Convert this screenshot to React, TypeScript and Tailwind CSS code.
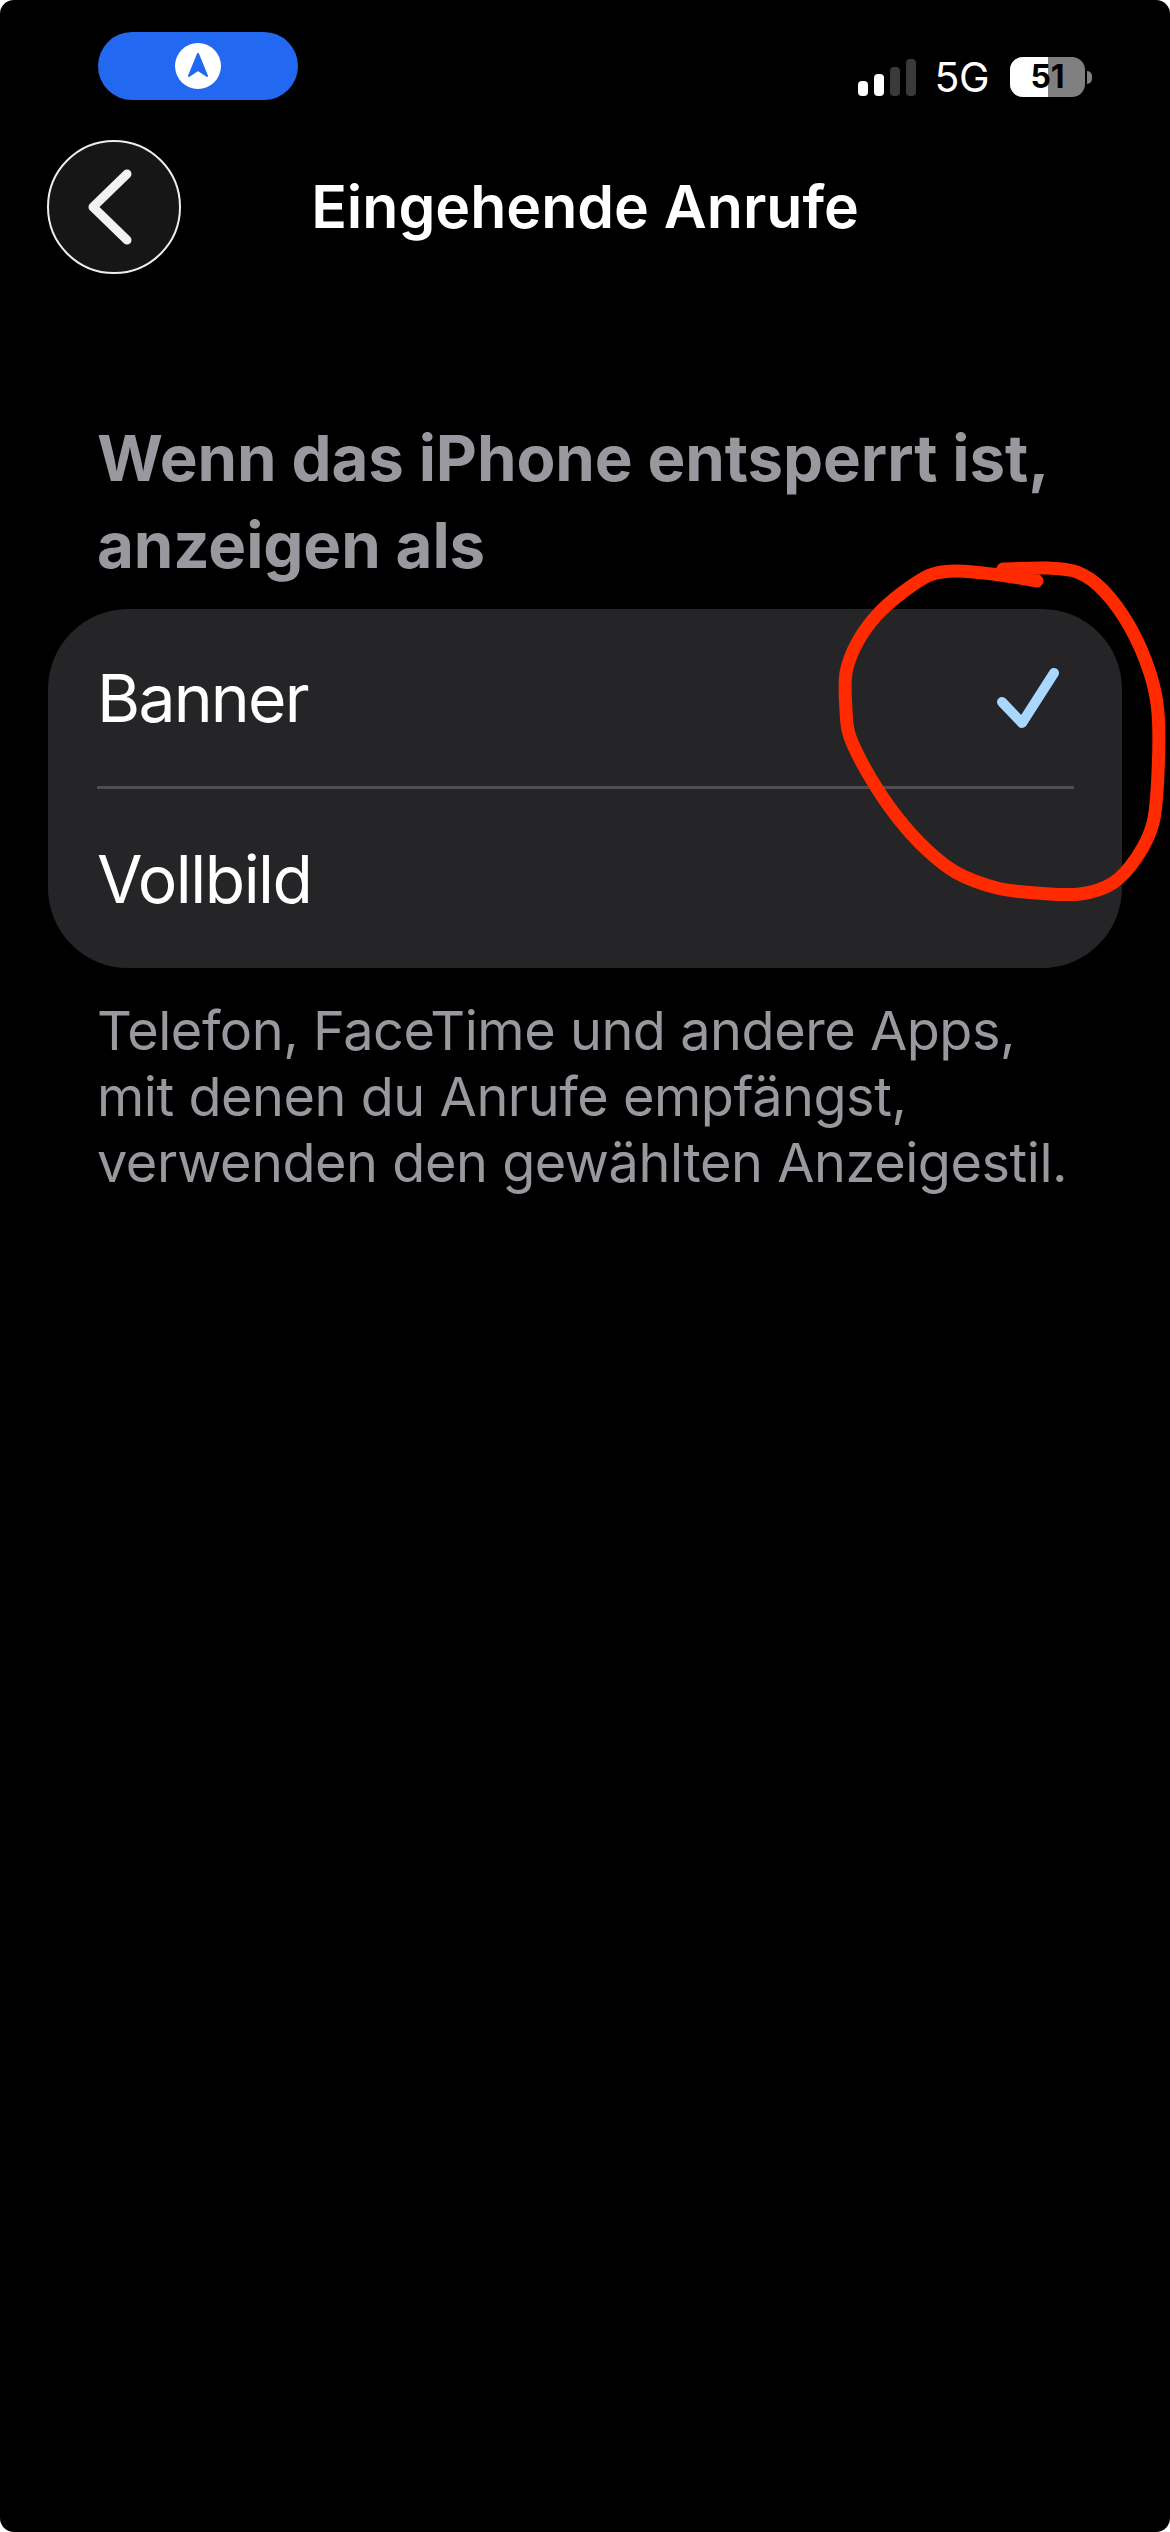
const loop: [number, number][] = [
  [1037, 581], [1000, 575], [957, 571], [930, 575], [903, 592], [877, 615], [857, 643], [846, 673],
  [846, 710], [850, 737], [870, 777], [897, 817], [927, 850], [957, 873], [997, 888], [1037, 893],
  [1080, 894], [1113, 883], [1137, 857], [1153, 823], [1158, 773], [1158, 713], [1150, 673],
  [1130, 627], [1103, 590], [1077, 572], [1047, 568], [1003, 569],
];

function smooth(p: [number, number][]) {
  let d = `M${p[0][0]} ${p[0][1]}`;
  for (let i = 0; i < p.length - 1; i++) {
    const a = p[Math.max(i - 1, 0)];
    const b = p[i];
    const c = p[i + 1];
    const e = p[Math.min(i + 2, p.length - 1)];
    d += ` C${b[0] + (c[0] - a[0]) / 6} ${b[1] + (c[1] - a[1]) / 6} ${c[0] - (e[0] - b[0]) / 6} ${c[1] - (e[1] - b[1]) / 6} ${c[0]} ${c[1]}`;
  }
  return d;
}

export default function App() {
  const font = { fontFamily: 'Inter, "Liberation Sans", sans-serif' };
  return (
    <div className="w-[1170px] h-[2532px] bg-white">
      <div style={font} className="relative w-[1170px] h-[2532px] bg-black rounded-[14px] overflow-hidden text-white">
        {/* status bar */}
        <div className="h-[140px] flex items-start justify-between pl-[98px]">
          <div className="mt-[32px] w-[200px] h-[68px] rounded-full bg-[#2268f0] flex items-center justify-center">
            <svg width="46" height="46" viewBox="0 0 46 46">
              <circle cx="23" cy="23" r="23" fill="#fff" />
              <path d="M23 11 L32 33 L23 27 L14 33 Z" fill="#2268f0" stroke="#2268f0" strokeWidth="2" strokeLinejoin="round" />
            </svg>
          </div>
          <div className="mt-[57px] mr-[78px] flex items-center">
            <svg width="58" height="38" viewBox="0 0 58 38" className="mr-[18px] mt-[2px]">
              <rect x="0" y="22" width="10" height="15" rx="4" fill="#fff" />
              <rect x="16" y="15" width="10" height="22" rx="4" fill="#fff" />
              <rect x="32" y="8" width="10" height="29" rx="4" fill="#3a3a3a" />
              <rect x="48" y="0" width="10" height="37" rx="4" fill="#3a3a3a" />
            </svg>
            <span className="text-[41px] leading-[40px] font-normal mr-[21px] tracking-[-0.5px]">5G</span>
            <div className="relative flex items-center">
              <div className="relative w-[75px] h-[40px] rounded-[13px] overflow-hidden flex bg-[#808080]">
                <div className="w-[38px] h-full bg-white" />
                <div className="absolute inset-0 flex items-center justify-center text-black text-[32px] font-bold leading-none">51</div>
              </div>
              <div className="ml-[2px] w-[5px] h-[13px] rounded-r-full bg-[#808080]" />
            </div>
          </div>
        </div>

        {/* nav */}
        <div className="relative h-[134px] mx-[47px] flex items-center justify-center">
          <div className="absolute left-0 top-0 w-[134px] h-[134px] rounded-full bg-[#161616] border-2 border-[#eeeeee] flex items-center justify-center">
            <svg width="48" height="76" viewBox="0 0 48 76" className="mr-[8px]">
              <path d="M41 5 L7 38 L41 71" fill="none" stroke="#f2f2f2" strokeWidth="9" strokeLinecap="round" strokeLinejoin="round" />
            </svg>
          </div>
          <h1 className="text-[59px] leading-[70px] font-semibold">Eingehende Anrufe</h1>
        </div>

        {/* section heading */}
        <h2 className="mt-[140px] ml-[97px] text-[#98989e] text-[63.6px] leading-[87px] font-bold tracking-[-0.1px]">
          Wenn das iPhone entsperrt ist,
          <br />
          anzeigen als
        </h2>

        {/* list */}
        <div className="mt-[21px] mx-[48px] w-[1074px] rounded-[80px] bg-[#252528] pl-[49px] pr-[48px]">
          <div className="h-[177px] pt-[1px] flex items-center justify-between">
            <span className="text-[66px] leading-[80px] tracking-[-1.8px]">Banner</span>
            <svg width="66" height="66" viewBox="0 0 66 66" className="mr-[13px] mt-[3px]">
              <path d="M7 35 L27 56 L59 6" fill="none" stroke="#a8d8ff" strokeWidth="10" strokeLinecap="round" strokeLinejoin="round" />
            </svg>
          </div>
          <div className="h-[3px] bg-[#4d4d52]" />
          <div className="h-[179px] flex items-center">
            <span className="text-[66px] leading-[80px] tracking-[-1.5px]">Vollbild</span>
          </div>
        </div>

        {/* footer note */}
        <p className="mt-[30px] ml-[97px] text-[#98989e] text-[54px] leading-[66px] tracking-[-0.45px]">
          Telefon, FaceTime und andere Apps,
          <br />
          mit denen du Anrufe empfängst,
          <br />
          verwenden den gewählten Anzeigestil.
        </p>

        {/* hand-drawn annotation */}
        <svg className="absolute left-0 top-0 pointer-events-none" width="1170" height="2532" viewBox="0 0 1170 2532">
          <path d={smooth(loop)} fill="none" stroke="#ff2a00" strokeWidth="13" strokeLinecap="round" strokeLinejoin="round" />
        </svg>
      </div>
    </div>
  );
}
